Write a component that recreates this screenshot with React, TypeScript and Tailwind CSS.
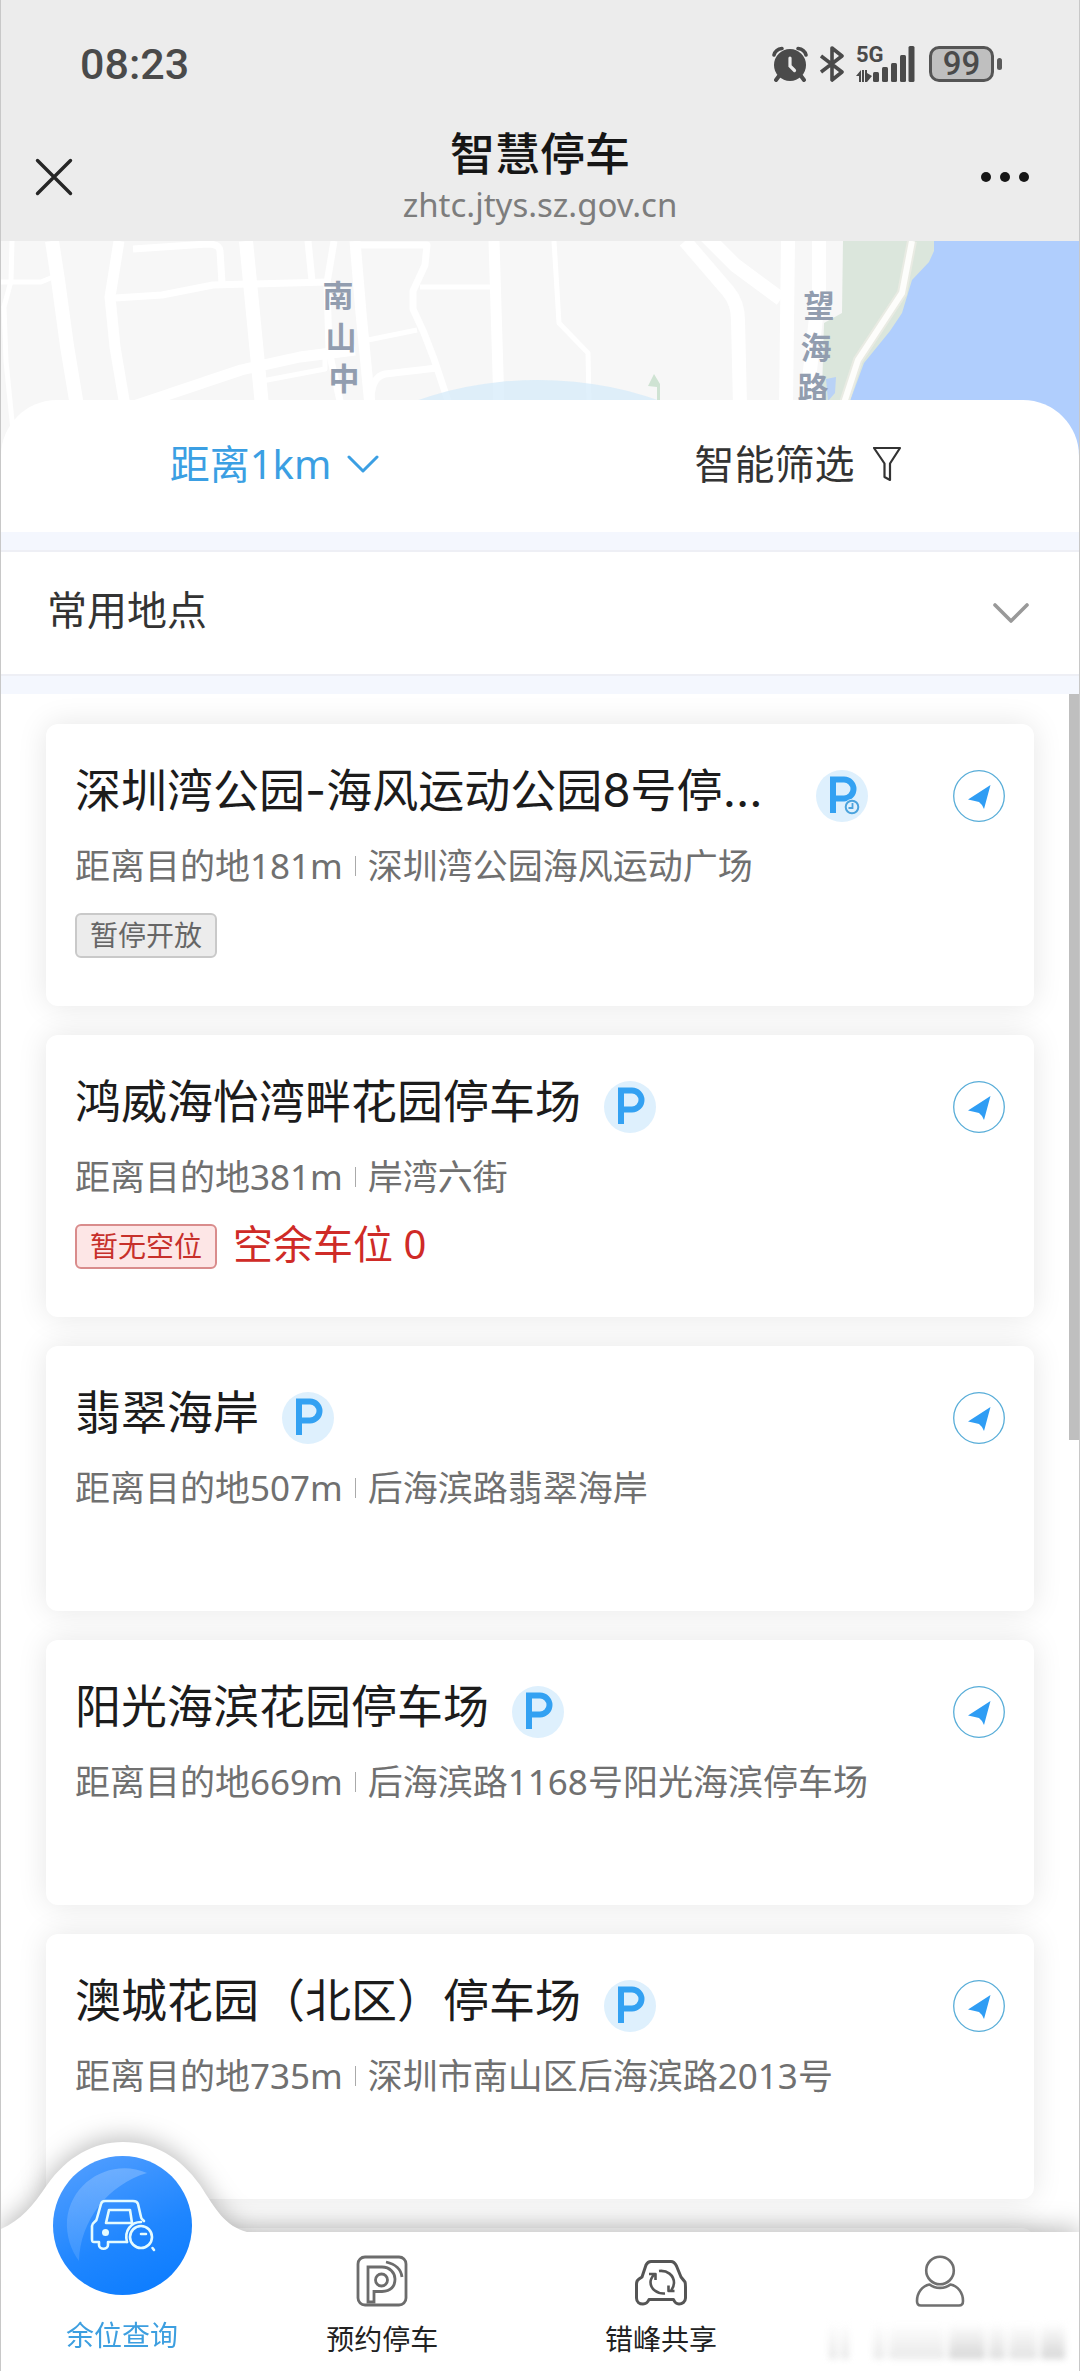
import type { ReactNode } from 'react';

type Tag = { label: string; tone: 'muted' | 'danger' };

type ParkingLot = {
  id: number;
  name: string;
  distance: string;
  address: string;
  timed?: boolean;
  tag?: Tag;
  free?: number;
};

const LOTS: ParkingLot[] = [
  {
    id: 1,
    name: '深圳湾公园-海风运动公园8号停车场',
    distance: '181m',
    address: '深圳湾公园海风运动广场',
    timed: true,
    tag: { label: '暂停开放', tone: 'muted' },
  },
  {
    id: 2,
    name: '鸿威海怡湾畔花园停车场',
    distance: '381m',
    address: '岸湾六街',
    tag: { label: '暂无空位', tone: 'danger' },
    free: 0,
  },
  { id: 3, name: '翡翠海岸', distance: '507m', address: '后海滨路翡翠海岸' },
  { id: 4, name: '阳光海滨花园停车场', distance: '669m', address: '后海滨路1168号阳光海滨停车场' },
  { id: 5, name: '澳城花园（北区）停车场', distance: '735m', address: '深圳市南山区后海滨路2013号' },
];

const TAG_TONES: Record<Tag['tone'], string> = {
  muted: 'border-[#c9c9c9] bg-[#ececec] text-[#666666]',
  danger: 'border-[#d98c8c] bg-[#fde6e6] text-[#c7302b]',
};

const StatusBar = () => (
  <div className="flex items-center justify-between pt-10 pr-[77px] pl-[79px]">
    <span className="font-[Roboto,sans-serif] text-[43px] leading-[48px] font-medium text-[#4a4a4a]">08:23</span>
    <div className="flex items-center text-[#4a4a4a]">
      <svg className="h-9 w-9" viewBox="0 0 36 36" fill="none" stroke="currentColor" strokeLinecap="round">
        <circle cx="18" cy="19" r="16" fill="currentColor" stroke="none" />
        <path d="M2 9C3 5 6 3 10 2.500M26 2.500C30 3 33 5 34 9" strokeWidth="3.500" />
        <path d="M7 30L4 34M29 30L32 34" strokeWidth="4" />
        <path d="M18 12V20L22.500 24.500" stroke="#ececec" strokeWidth="3.200" />
      </svg>
      <svg className="ml-3 h-9 w-6" viewBox="0 0 24 36" fill="none" stroke="currentColor" strokeWidth="3.600" strokeLinejoin="round">
        <path d="M1 10L22 26L12 34V2L22 10L1 26" />
      </svg>
      <div className="ml-3 flex h-9 items-end">
        <div className="flex h-9 w-4 flex-col justify-between">
          <span className="font-[Roboto,sans-serif] text-[22px] leading-[18px] font-bold">5G</span>
          <svg className="h-3 w-4" viewBox="0 0 16 12" fill="currentColor">
            <path d="M0 6L5 0V12H3V6ZM6 0H8V12H6ZM9 0H11V3L16 6L11 12H9Z" />
          </svg>
        </div>
        <svg className="h-9 w-[43px]" viewBox="0 0 43 36" fill="currentColor">
          <rect x="1" y="26" width="6" height="10" rx="1.500" />
          <rect x="10" y="21" width="6" height="15" rx="1.500" />
          <rect x="19" y="17" width="6" height="19" rx="1.500" />
          <rect x="28" y="9" width="6" height="27" rx="1.500" />
          <rect x="36.500" y="0" width="6" height="36" rx="1.500" />
        </svg>
      </div>
      <div className="ml-[14px] flex h-[36px] w-[65px] items-center justify-center rounded-[10px] border-3 border-[#555555] bg-[#bfbfbf] font-[Roboto,sans-serif] text-[33px] leading-[32px] font-medium">
        99
      </div>
      <span className="ml-[3px] h-3 w-[5px] rounded-full bg-[#5a5a5a]" />
    </div>
  </div>
);

const TitleBar = () => (
  <div className="flex items-center justify-between pr-[50px] pl-[34px]">
    <button type="button" aria-label="关闭" className="w-24 text-[#262626]">
      <svg className="h-[38px] w-[38px]" viewBox="0 0 38 38" fill="none" stroke="currentColor" strokeWidth="3.400" strokeLinecap="round">
        <path d="M2.500 2.500L35.500 35.500M35.500 2.500L2.500 35.500" />
      </svg>
    </button>
    <div className="text-center">
      <h1 className="text-[45px] leading-[52px] font-medium text-[#161616]">智慧停车</h1>
      <p className="mt-1 text-[33px] leading-[42px] text-[#7d7d7d]">zhtc.jtys.sz.gov.cn</p>
    </div>
    <button type="button" aria-label="更多" className="flex w-20 justify-end gap-[9px]">
      <span className="h-[10px] w-[10px] rounded-full bg-[#161616]" />
      <span className="h-[10px] w-[10px] rounded-full bg-[#161616]" />
      <span className="h-[10px] w-[10px] rounded-full bg-[#161616]" />
    </button>
  </div>
);

const MapPreview = () => (
  <svg className="absolute inset-x-0 top-0 h-[220px] w-full" viewBox="0 0 1080 220" preserveAspectRatio="xMidYMin slice" aria-hidden="true">
    <rect width="1080" height="220" fill="#f7f7f7" />
    <path d="M843 0L842 72L824 82L820 220H1080V0Z" fill="#dbe6dc" />
    <path d="M934 0V10L929 21L912 39L902 72L890 90L864 122L850 160V220H1080V0Z" fill="#b0cefd" />
    <path d="M826 138L836 136L835 152L828 160Z" fill="#b9d2f6" />
    <g fill="none" stroke="#ffffff" strokeLinejoin="round">
      <g strokeWidth="5">
        <path d="M12 0L11 40L4 66L6 120L14 200" />
        <path d="M0 41H41L58 34" />
        <path d="M420 46H491" />
        <path d="M368 99L417 89" />
        <path d="M554 0L559 82L588 112L589 160" />
        <path d="M262 140L325 128V112" />
      </g>
      <g strokeWidth="7">
        <path d="M115 57L162 54L213 44L327 41" />
        <path d="M133 8L207 3Q220 3 220 10L222 42" />
        <path d="M308 0L312 40M334 0L327 42L329 110L340 160" />
        <path d="M358 4H427L425 24L413 50V68L424 92L434 118L448 160" />
        <path d="M371 160Q371 136 385 133L437 127" />
      </g>
      <g strokeWidth="11">
        <path d="M119 0L110 56L115 106L125 165" />
        <path d="M355 0L361 72L370 165" />
        <path d="M131 166L241 129L300 116L355 109" />
        <path d="M494 0L499 165" />
      </g>
      <g strokeWidth="14">
        <path d="M52 0L58 39L67 105L77 165" />
        <path d="M246 0L253 72L262 165" />
        <path d="M685 0L728 50Q738 62 738 79L740 165" />
        <path d="M705 -6L735 24L781 58" />
        <path d="M788 0L786 165M819 0V50L806 165" />
      </g>
    </g>
    <path d="M912 0L902 52L858 119L843 165" fill="none" stroke="#e9ebe3" strokeWidth="10" />
    <path d="M912 0L902 52L858 119L843 165" fill="none" stroke="#fdfdfb" strokeWidth="6" />
    <circle cx="538" cy="509" r="370" fill="#d3e9f9" fillOpacity="0.700" />
    <path d="M648 145L654 133L660 143V165H657V146Z" fill="#cfe3d3" />
    <g fontSize="31" fontWeight="700" fill="#929daf" textAnchor="middle">
      <text x="338" y="66">南</text>
      <text x="341" y="108">山</text>
      <text x="344" y="149">中</text>
      <text x="819" y="76">望</text>
      <text x="816" y="118">海</text>
      <text x="813" y="158">路</text>
    </g>
  </svg>
);

const FilterRow = () => (
  <div className="flex h-[132px] pr-5 pl-3 text-[40px]">
    <button type="button" className="flex flex-1 items-center justify-center pb-1 text-[#3b9fe3]">
      距离1km
      <svg className="ml-4 h-5 w-8" viewBox="0 0 32 20" fill="none" stroke="currentColor" strokeWidth="3" strokeLinecap="round" strokeLinejoin="round">
        <path d="M2 3L16 17L30 3" />
      </svg>
    </button>
    <button type="button" className="flex flex-1 items-center justify-center pb-1 text-[#333333]">
      智能筛选
      <svg className="ml-[18px] h-9 w-7" viewBox="0 0 28 36" fill="none" stroke="currentColor" strokeWidth="2.200" strokeLinejoin="round">
        <path d="M1 2H27L17 17.500V34L11.500 31V17.500Z" />
      </svg>
    </button>
  </div>
);

const ParkingIcon = ({ timed }: { timed?: boolean }) => (
  <svg className="h-[52px] w-[52px] shrink-0" viewBox="0 0 52 52" fill="none" aria-hidden="true">
    <circle cx="26" cy="26" r="26" fill="#def0fd" />
    <path d="M17 43V9.500H28A9.500 9.500 0 0 1 28 28.500H17" stroke="#33a1f2" strokeWidth="6" />
    {timed && (
      <>
        <circle cx="36" cy="37" r="8" fill="#def0fd" />
        <circle cx="36" cy="37" r="6.300" stroke="#4aa3dd" strokeWidth="2" />
        <path d="M36.500 33V38H32.500" stroke="#4aa3dd" strokeWidth="1.800" />
      </>
    )}
  </svg>
);

const LotCard = ({ lot }: { lot: ParkingLot }) => (
  <li className="rounded-[12px] bg-white px-[29px] pt-[38px] pb-12 shadow-[0_0_30px_rgba(0,0,0,0.1)]">
    <div className="flex items-start">
      <h2 className="max-w-[718px] truncate font-[Inter,'Noto_Sans_CJK_SC',sans-serif] text-[46px] leading-[56px] text-[#1c1c1c]">
        {lot.name}
      </h2>
      <div className="mt-2 ml-[23px]">
        <ParkingIcon timed={lot.timed} />
      </div>
      <button type="button" aria-label={`导航到${lot.name}`} className="mt-2 ml-auto">
        <svg className="h-[52px] w-[52px]" viewBox="0 0 52 52" fill="none">
          <circle cx="26" cy="26" r="25.300" stroke="#58add8" strokeWidth="1.300" />
          <path d="M37.500 15L15 29.500Q21 30.500 26 32Q29 34 31 39Z" fill="#2f9df4" />
        </svg>
      </button>
    </div>
    <div className="mt-5 flex h-12 items-center text-[35px] text-[#707070]">
      <span>距离目的地{lot.distance}</span>
      <span className="mx-3 h-5 w-px bg-[#aaaaaa]" />
      <span>{lot.address}</span>
    </div>
    <div className="mt-[23px] flex min-h-7 items-center">
      {lot.tag && (
        <span className={`flex h-[45px] items-center rounded-[6px] border-2 px-[13px] pb-[2px] text-[28px] ${TAG_TONES[lot.tag.tone]}`}>
          {lot.tag.label}
        </span>
      )}
      {lot.free !== undefined && (
        <span className="ml-4 flex h-[45px] items-center pb-[6px] text-[40px] text-[#cf2b27]">空余车位 {lot.free}</span>
      )}
    </div>
  </li>
);

const ReserveIcon = () => (
  <svg className="h-[52px] w-[52px]" viewBox="0 0 52 52" fill="none" stroke="#6c6c6c" strokeWidth="2.800">
    <rect x="2" y="2" width="48" height="48" rx="7" />
    <path d="M12 12H26C34 12 39 18 39 24C39 32 34 36 26 36.500H18V47H12Z" />
    <circle cx="25.500" cy="25" r="6" />
    <path d="M30 7C39 9 45 14 46 22" />
  </svg>
);

const ShareIcon = () => (
  <svg className="h-[52px] w-[52px]" viewBox="0 0 52 52" fill="none" stroke="#555555" strokeLinejoin="round">
    <path
      d="M16 6.500H36C39 6.500 40 8 41.500 11L46 22L50 27C50.500 28 50.500 30 50.500 32V43C50.500 47 47 49 44 49C41 49 39.500 47 38.500 44.500H14C13 47 11 49 8 49C4.500 49 1.500 47 1.500 43V29C1.500 26 2.500 25 4 24L7 22L11 10C12 8 13.500 6.500 16 6.500Z"
      strokeWidth="3"
    />
    <path d="M24 16C32 15 39 20 39 28C39 31 38 33 36 36M30 38.500C22 39 15.500 34 15.500 27C15.500 24 17 22 19 19.500M14 19H20.500V25M39.500 36H33.500V30.500" strokeWidth="2.600" />
  </svg>
);

const ProfileIcon = () => (
  <svg className="h-[52px] w-[52px]" viewBox="0 0 52 52" fill="none" stroke="#707070" strokeWidth="2.600" strokeLinejoin="round">
    <circle cx="26" cy="15.500" r="13.800" />
    <path d="M15.500 29.500C21 34 31 34 36.500 29.500C44 31 49 38 49 46C49 49 48 50.500 45 50.500H7C4 50.500 3 49 3 46C3 38 8 31 15.500 29.500Z" />
  </svg>
);

const SearchCarIcon = () => (
  <svg className="h-[139px] w-[139px]" viewBox="0 0 139 139" fill="none">
    <defs>
      <linearGradient id="tab-disc" x1="0.250" y1="0" x2="0.700" y2="1">
        <stop offset="0" stopColor="#4f9dff" />
        <stop offset="0.600" stopColor="#1f86ff" />
        <stop offset="1" stopColor="#0d7dff" />
      </linearGradient>
      <linearGradient id="tab-gloss" x1="0.600" y1="0" x2="0.200" y2="1">
        <stop offset="0" stopColor="#ffffff" stopOpacity="0.220" />
        <stop offset="1" stopColor="#ffffff" stopOpacity="0.120" />
      </linearGradient>
    </defs>
    <circle cx="69.500" cy="69.500" r="69.500" fill="url(#tab-disc)" />
    <path d="M94 17C60 2 18 24 14 64C13 80 18 94 26 105C27 64 56 28 94 17Z" fill="url(#tab-gloss)" />
    <g stroke="#e4fbff" strokeWidth="2.600" strokeLinecap="round" strokeLinejoin="round">
      <path d="M74 86H55V89C55 94 46 94 46 89V86H41C39 86 39 85 39 83V70C39 66 44 66 44 62L48 48C48.500 46 50 45 52 45H80C83 45 84.500 46 85 48L88 61C88 63 90 64 91 65" />
      <path d="M56 54H77L79 67H53Z" />
      <circle cx="88" cy="81" r="11" />
      <path d="M74 86C71 75 78 66 88 66M88 78H93M99.500 92L101 94" />
    </g>
    <circle cx="52.500" cy="76.500" r="3.500" fill="#e4fbff" />
  </svg>
);

const TabItem = ({ icon, label, children }: { icon: ReactNode; label?: string; children?: ReactNode }) => (
  <a href="#" aria-label={label} className="flex flex-1 flex-col items-center pt-[23px] text-[28px] leading-[36px] text-[#222222]">
    {icon}
    <span className="mt-[14px] flex h-[36px] items-center">{children}</span>
  </a>
);

const TabBar = () => (
  <nav className="relative flex h-[139px] bg-white drop-shadow-[0_-4px_12px_rgba(0,0,0,0.26)]">
    <svg className="absolute bottom-full left-0 h-[90px] w-[246px]" viewBox="0 0 246 90" fill="#ffffff" aria-hidden="true">
      <path d="M0 90V87C20 78 32 64 46 43C66 15 92 0 122 0C153 0 179 15 199 43C215 68 224 84 246 90Z" />
    </svg>
    <a href="#" aria-current="page" className="relative flex w-[242px] flex-col items-center justify-end pb-[18px] text-[28px] leading-[36px] text-[#3d9fe0]">
      <span className="mb-[22px]">
        <SearchCarIcon />
      </span>
      余位查询
    </a>
    <TabItem icon={<ReserveIcon />}>预约停车</TabItem>
    <TabItem icon={<ShareIcon />}>错峰共享</TabItem>
    <TabItem icon={<ProfileIcon />} label="我的" />
    <div className="absolute right-3 bottom-3 flex h-9 w-[238px] gap-1 opacity-60 blur-[3px]" aria-hidden="true">
      <span className="w-2 bg-linear-to-b from-white to-[#d8d8d8]" />
      <span className="mr-5 w-2 bg-linear-to-b from-white to-[#d8d8d8]" />
      <span className="w-3 bg-linear-to-b from-white to-[#dedede]" />
      <span className="w-14 bg-linear-to-b from-white to-[#dcdcdc]" />
      <span className="w-9 bg-linear-to-b from-white to-[#bdbdbd]" />
      <span className="w-4 bg-linear-to-b from-white to-[#c9c9c9]" />
      <span className="w-7 bg-linear-to-b from-white to-[#cfcfcf]" />
      <span className="w-6 bg-linear-to-b from-white to-[#bdbdbd]" />
    </div>
  </nav>
);

export default function App() {
  return (
    <div className="flex h-screen flex-col overflow-hidden border-x border-[#c8c8c8] bg-white font-['Noto_Sans','Noto_Sans_CJK_SC',sans-serif]">
      <header className="h-[241px] shrink-0 bg-[#ececec]">
        <StatusBar />
        <div className="mt-10">
          <TitleBar />
        </div>
      </header>

      <div className="relative shrink-0 pt-[159px]">
        <MapPreview />
        <section className="relative rounded-t-[56px] bg-white">
          <FilterRow />
        </section>
      </div>

      <section className="shrink-0 border-y-[18px] border-[#f4f7fe] bg-white">
        <button
          type="button"
          className="flex h-[126px] w-full items-center justify-between border-y-2 border-[#eeeff5] pr-[50px] pl-[46px] text-[40px] text-[#333333]"
        >
          <span className="pb-[6px]">常用地点</span>
          <svg className="h-5 w-9" viewBox="0 0 36 20" fill="none" stroke="#999999" strokeWidth="3.600" strokeLinecap="round" strokeLinejoin="round">
            <path d="M2 2L18 18L34 2" />
          </svg>
        </button>
      </section>

      <main className="relative min-h-0 flex-1 overflow-hidden">
        <ul className="flex flex-col gap-[29px] px-[45px] pt-[30px]">
          {LOTS.map((lot) => (
            <LotCard key={lot.id} lot={lot} />
          ))}
          <li className="h-[265px] rounded-[12px] bg-white shadow-[0_0_30px_rgba(0,0,0,0.1)]" />
        </ul>
        <div className="absolute top-0 right-0 h-16/33 w-[10px] bg-[#bfbfbf]" />
      </main>

      <TabBar />
    </div>
  );
}
